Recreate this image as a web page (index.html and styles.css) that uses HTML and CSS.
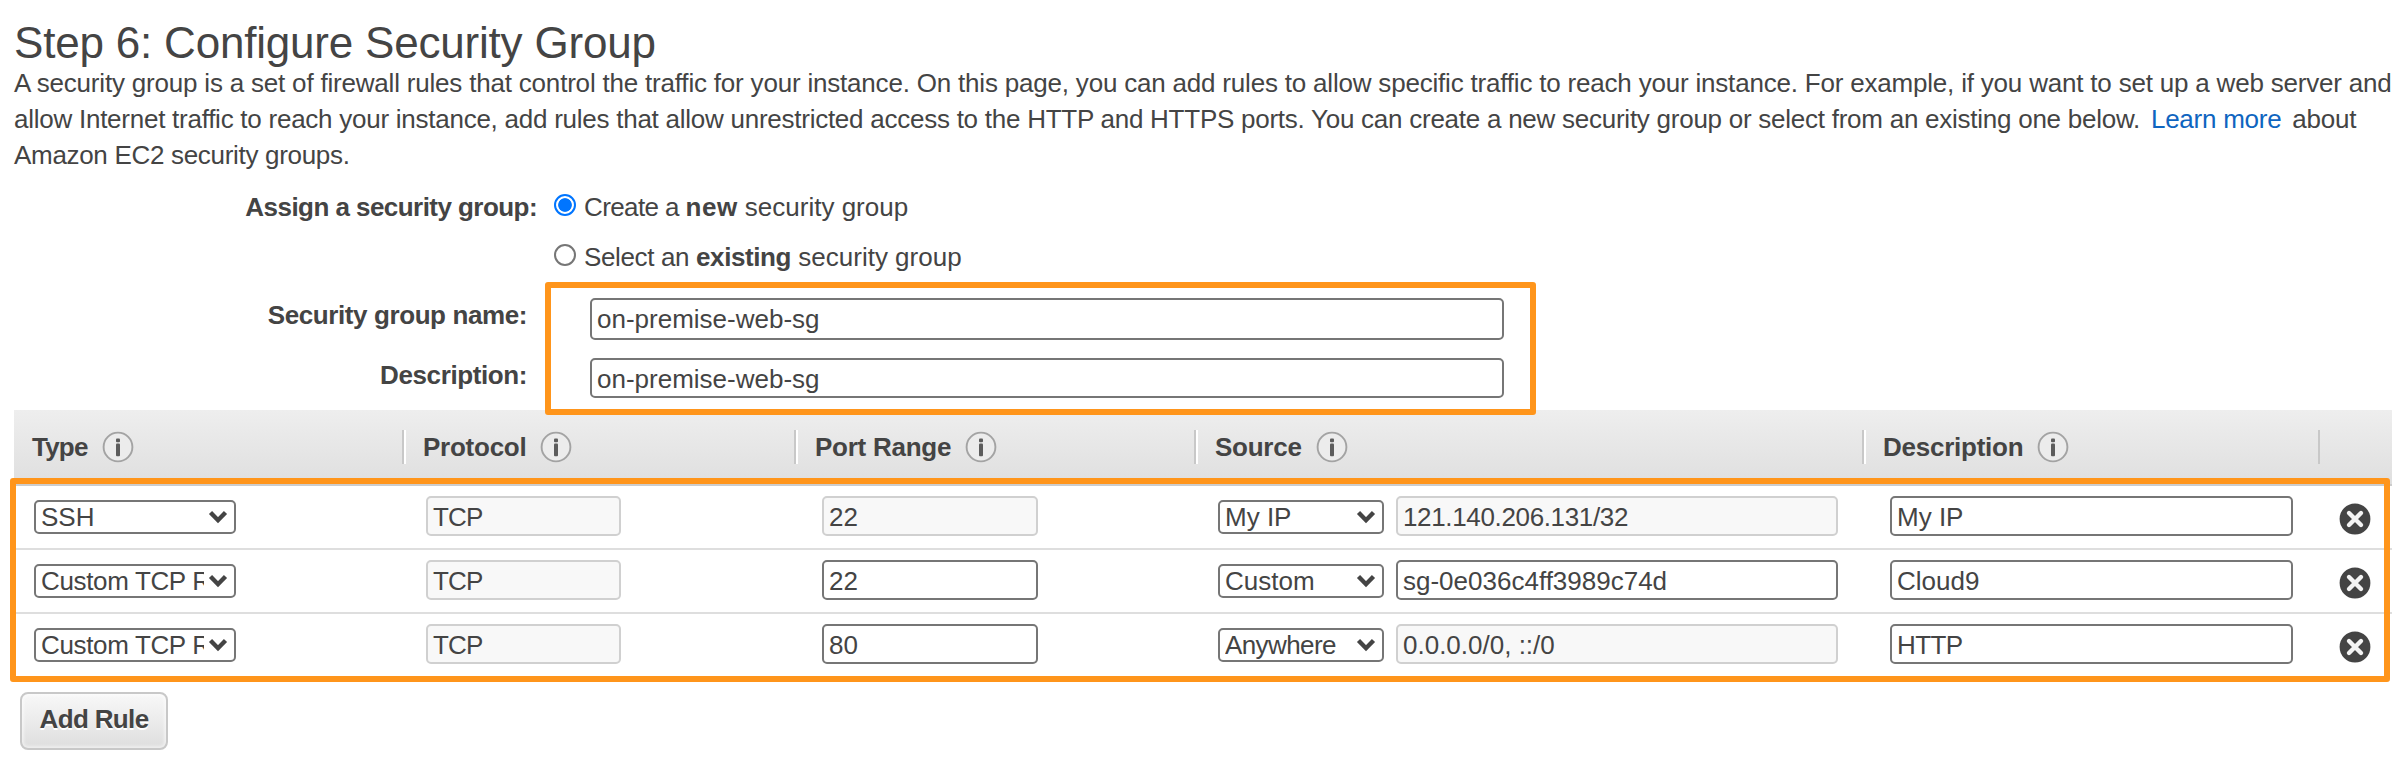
FILE: index.html
```html
<!DOCTYPE html>
<html lang="en">
<head>
<meta charset="utf-8">
<title>Step 6: Configure Security Group</title>
<link rel="stylesheet" href="styles.css">
</head>
<body>
<svg class="defs" width="0" height="0" aria-hidden="true">
  <symbol id="info" viewBox="0 0 32 32">
    <circle cx="16" cy="16" r="14.4" fill="#ececec" stroke="#a3a3a3" stroke-width="1.900"/>
    <rect x="14" y="7.400" width="4" height="3.800" rx="1" fill="#5c5c5c"/>
    <rect x="14" y="12.600" width="4" height="12.600" rx="1" fill="#5c5c5c"/>
  </symbol>
  <symbol id="remove" viewBox="0 0 32 32">
    <circle cx="16" cy="16" r="15.400" fill="#444"/>
    <path d="M10 10L22 22M22 10L10 22" stroke="#f4f4f4" stroke-width="4.400" stroke-linecap="round"/>
  </symbol>
  <symbol id="chevron" viewBox="0 0 20 14">
    <path d="M2.500 2.500L10 10.200L17.500 2.500" fill="none" stroke="#444" stroke-width="4.400"/>
  </symbol>
</svg>
<main class="page">
  <h1 class="title"><span>Step 6: Configure Security Group</span></h1>
  <p class="intro">
    <span class="line line-1">A security group is a set of firewall rules that control the traffic for your instance. On this page, you can add rules to allow specific traffic to reach your instance. For example, if you want to set up a web server and</span>
    <span class="line line-2">allow Internet traffic to reach your instance, add rules that allow unrestricted access to the HTTP and HTTPS ports. You can create a new security group or select from an existing one below. <a class="link" href="#">Learn more</a> about</span>
    <span class="line line-3">Amazon EC2 security groups.</span>
  </p>

  <section class="assign">
    <div class="assign-label"><b>Assign a security group:</b></div>
    <div class="options">
      <label class="option"><input class="radio" type="radio" name="sg" checked><span><span class="lead-new">Create a </span><b class="new">new</b> security group</span></label>
      <label class="option"><input class="radio" type="radio" name="sg"><span><span class="lead-existing">Select an </span><b class="existing">existing</b> security group</span></label>
    </div>
  </section>

  <section class="details">
    <div class="detail"><div class="detail-label"><b>Security group name:</b></div><div class="field detail-name"><span>on-premise-web-sg</span></div></div>
    <div class="detail"><div class="detail-label"><b>Description:</b></div><div class="field detail-desc"><span>on-premise-web-sg</span></div></div>
    <div class="highlight highlight-details"></div>
  </section>

  <section class="rules">
    <div class="grid head">
      <div class="th"><b>Type</b><svg class="info"><use href="#info"/></svg></div>
      <div class="th"><b>Protocol</b><svg class="info"><use href="#info"/></svg></div>
      <div class="th"><b>Port Range</b><svg class="info"><use href="#info"/></svg></div>
      <div class="th"><b>Source</b><svg class="info"><use href="#info"/></svg></div>
      <div class="th"><b>Description</b><svg class="info"><use href="#info"/></svg></div>
      <div class="th"></div>
    </div>
    <div class="grid row">
      <div class="td"><div class="select type"><span>SSH</span><svg class="chevron"><use href="#chevron"/></svg></div></div>
      <div class="td td-protocol"><div class="field protocol disabled"><span>TCP</span></div></div>
      <div class="td td-port"><div class="field port disabled"><span>22</span></div></div>
      <div class="td td-source"><div class="select source"><span>My IP</span><svg class="chevron"><use href="#chevron"/></svg></div><div class="field cidr disabled"><span class="tight">121.140.206.131/32</span></div></div>
      <div class="td td-note"><div class="field note"><span>My IP</span></div></div>
      <div class="td td-remove"><svg class="remove"><use href="#remove"/></svg></div>
    </div>
    <div class="grid row">
      <div class="td"><div class="select type"><span class="tight">Custom TCP Rule</span><svg class="chevron"><use href="#chevron"/></svg></div></div>
      <div class="td td-protocol"><div class="field protocol disabled"><span>TCP</span></div></div>
      <div class="td td-port"><div class="field port"><span>22</span></div></div>
      <div class="td td-source"><div class="select source"><span>Custom</span><svg class="chevron"><use href="#chevron"/></svg></div><div class="field cidr"><span>sg-0e036c4ff3989c74d</span></div></div>
      <div class="td td-note"><div class="field note"><span>Cloud9</span></div></div>
      <div class="td td-remove"><svg class="remove"><use href="#remove"/></svg></div>
    </div>
    <div class="grid row">
      <div class="td"><div class="select type"><span class="tight">Custom TCP Rule</span><svg class="chevron"><use href="#chevron"/></svg></div></div>
      <div class="td td-protocol"><div class="field protocol disabled"><span>TCP</span></div></div>
      <div class="td td-port"><div class="field port"><span>80</span></div></div>
      <div class="td td-source"><div class="select source"><span class="tighter">Anywhere</span><svg class="chevron"><use href="#chevron"/></svg></div><div class="field cidr disabled"><span>0.0.0.0/0, ::/0</span></div></div>
      <div class="td td-note"><div class="field note"><span class="tighter">HTTP</span></div></div>
      <div class="td td-remove"><svg class="remove"><use href="#remove"/></svg></div>
    </div>
    <div class="highlight highlight-rules"></div>
  </section>
  <div class="add"><b>Add Rule</b></div>
</main>
</body>
</html>
```
FILE: styles.css
```css
* { box-sizing: border-box; }
body {
  margin: 0;
  background: #fff;
  color: #444;
  font: 26px/36px "Liberation Sans", Arial, sans-serif;
}
.defs { display: none; }
.page { height: 784px; padding: 20px 12px 0 14px; overflow: hidden; }
.title {
  margin: 0;
  height: 45px;
  font-size: 44px;
  line-height: 46px;
  font-weight: 400;
  letter-spacing: -0.2px;
}
.intro { margin: 0; height: 108px; }
.line { display: block; width: max-content; white-space: nowrap; }
.line-1 { letter-spacing: -0.197px; }
.line-2 { letter-spacing: -0.253px; }
.line-3 { letter-spacing: -0.31px; }
.link { margin: 0 4px; color: #0f65c0; text-decoration: none; }

.assign { display: flex; padding-top: 14px; height: 125px; }
.assign-label { width: 523px; text-align: right; line-height: 40px; letter-spacing: -0.55px; }
.options { display: flex; flex-direction: column; gap: 10px; padding-left: 17px; }
.option { display: flex; gap: 8px; height: 40px; line-height: 40px; white-space: nowrap; }
.lead-new { letter-spacing: -0.6px; }
.lead-existing { letter-spacing: -0.36px; }
.new { letter-spacing: 0.5px; }
.existing { letter-spacing: -0.4px; }
.radio {
  appearance: none;
  width: 22px;
  height: 22px;
  margin: 7px 0 0;
  border: 2px solid #767676;
  border-radius: 50%;
  background: #fff;
}
.radio:checked {
  border-color: #0075ff;
  background: radial-gradient(circle, #0075ff 6.4px, #fff 7.2px);
}

.details { position: relative; height: 112px; }
.detail { display: flex; align-items: flex-start; height: 60px; }
.detail-label {
  width: 513px;
  margin-right: 63px;
  line-height: 34px;
  text-align: right;
  letter-spacing: -0.4px;
}
.field {
  border: 2px solid #767676;
  border-radius: 5px;
  height: 40px;
  padding-left: 5px;
  line-height: 39px;
  white-space: nowrap;
  overflow: hidden;
  background: #fff;
}
.detail-name, .detail-desc { width: 914px; }
.detail-name { height: 42px; }
.disabled { border-color: #d0d0d0; background: #f8f8f8; }
.highlight { position: absolute; border: 6px solid #ff951b; border-radius: 3px; }
.highlight-details { left: 531px; top: -16px; width: 991px; height: 133px; z-index: 2; }
.highlight-rules { left: -4px; top: 68px; width: 2380px; height: 204px; }

.rules { position: relative; height: 268px; width: 2378px; }
.grid { display: grid; grid-template-columns: 390px 392px 400px 668px 456px 72px; }
.head {
  height: 76px;
  background: linear-gradient(#eee, #dfdfdf);
  border-bottom: 2px solid #ccc;
}
.th {
  display: flex;
  align-items: center;
  gap: 14px;
  height: 34px;
  margin-top: 20px;
  padding-left: 17px;
  border-left: 2px solid #fff;
  border-right: 2px solid #c8c8c8;
  letter-spacing: -0.25px;
}
.th:first-child { border-left-color: transparent; padding-left: 16px; letter-spacing: -0.8px; }
.th:last-child { border-color: transparent; }
.info, .remove { width: 32px; height: 32px; flex: none; }
.row { height: 64px; border-bottom: 2px solid #dedede; }
.row:nth-child(4) { border-color: transparent; }
.td { display: flex; align-items: center; gap: 12px; padding-left: 20px; }
.td-protocol, .td-source { padding-left: 22px; }
.td-port, .td-note { padding-left: 26px; }
.td-remove { padding-left: 19px; }
.td .field { margin-bottom: 2px; }
.remove { margin-top: 4px; }
.select {
  display: flex;
  align-items: center;
  height: 34px;
  padding: 0 6px 0 5px;
  border: 2px solid #767676;
  border-radius: 5px;
  background: #fff;
}
.select span { flex: 1; overflow: hidden; white-space: nowrap; line-height: 34px; margin-right: 4px; }
.chevron { width: 20px; height: 14px; flex: none; }
.tight { letter-spacing: -0.35px; }
.tighter { letter-spacing: -0.6px; }
.type { width: 202px; }
.protocol { width: 195px; letter-spacing: -0.8px; }
.port { width: 216px; }
.source { width: 166px; }
.cidr { width: 442px; }
.note { width: 403px; }
.add {
  margin: 14px 0 0 6px;
  width: 148px;
  height: 58px;
  border: 2px solid #c8c8c8;
  border-radius: 8px;
  background: linear-gradient(#f8f8f8, #dedede);
  box-shadow: inset 0 0 3px 2px rgba(255, 255, 255, .5);
  text-align: center;
  line-height: 50px;
  letter-spacing: -0.65px;
  text-shadow: 0 2px 0 #fff;
}
```
